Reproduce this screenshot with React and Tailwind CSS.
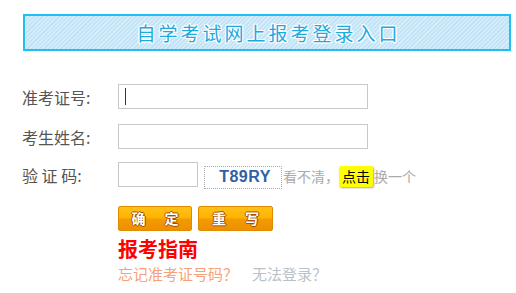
export default function App() {
  const font = { fontFamily: '"Noto Sans CJK SC", "Noto Sans", sans-serif' };
  const outline =
    "[text-shadow:1px_0_0_#fff,-1px_0_0_#fff,0_1px_0_#fff,0_-1px_0_#fff,1px_1px_0_#fff,-1px_-1px_0_#fff,1px_-1px_0_#fff,-1px_1px_0_#fff]";
  const btnText =
    "[text-shadow:1px_0_0_#a05000,-1px_0_0_#a05000,0_1px_0_#a05000,0_-1px_0_#a05000]";
  return (
    <div className="w-[516px] h-[293px] bg-white overflow-hidden" style={font}>
      <div className="pt-[14px] pl-[23px]">
        <div className="w-[488px] h-[37px] border-2 border-[#1fc0ef] flex items-center justify-center bg-[repeating-linear-gradient(135deg,#c2e3f6_0px,#c2e3f6_1.5px,#d5edfa_1.5px,#d5edfa_3px)]">
          <span
            className={`text-[19px] leading-none tracking-[3px] pl-[3px] text-[#1ea9df] ${outline}`}
          >
            自学考试网上报考登录入口
          </span>
        </div>
      </div>

      <div className="pl-[22px] pt-[33px] flex flex-col">
        <div className="flex items-center h-[25px]">
          <span className="w-[96px] text-[16px] text-[#555]">准考证号:</span>
          <div className="w-[250px] h-[25px] border border-[#c8c8c8] flex items-center pl-[6px]">
            <div className="w-[1px] h-[17px] bg-[#333]" />
          </div>
        </div>
        <div className="flex items-center h-[25px] mt-[15px]">
          <span className="w-[96px] text-[16px] text-[#555]">考生姓名:</span>
          <div className="w-[250px] h-[25px] border border-[#c8c8c8]" />
        </div>
        <div className="flex items-center h-[25px] mt-[13px]">
          <span className="w-[96px] text-[16px] text-[#555] whitespace-pre">验 证 码:</span>
          <div className="w-[80px] h-[25px] border border-[#c8c8c8]" />
          <div className="ml-[6px] mt-[5px] w-[78px] h-[23px] border border-dotted border-[#aaa] flex items-center justify-center">
            <span
              className="text-[16px] font-bold text-[#2f5fa8] tracking-[0.5px] pl-[4px]"
              style={{ fontFamily: '"Liberation Sans", Arial, sans-serif' }}
            >
              T89RY
            </span>
          </div>
          <span className="ml-[1px] mt-[3px] text-[14px] text-[#aaa] flex items-center">
            看不清，
            <span className="bg-[#ffff00] text-black px-[3px] rounded-[2px] shadow-[1px_1px_2px_rgba(0,0,0,0.35)] mr-[1px]">
              点击
            </span>
            换一个
          </span>
        </div>

        <div className="flex ml-[96px] mt-[19px] gap-[6px]">
          <div
            className={`w-[74px] h-[25px] rounded-[2px] border border-[#e08a00] bg-[linear-gradient(#ffc21a,#ffb300_45%,#f29a00_55%,#ef8f00)] flex items-center justify-center text-white text-[14px] font-bold whitespace-pre ${btnText}`}
          >
            确      定
          </div>
          <div
            className={`w-[75px] h-[25px] rounded-[2px] border border-[#e08a00] bg-[linear-gradient(#ffc21a,#ffb300_45%,#f29a00_55%,#ef8f00)] flex items-center justify-center text-white text-[14px] font-bold whitespace-pre ${btnText}`}
          >
            重      写
          </div>
        </div>

        <div className="ml-[96px] mt-[6px] text-[20px] leading-[24px] font-bold text-[#ff0000]">
          报考指南
        </div>
        <div className="ml-[96px] mt-[3px] text-[15px] leading-[20px] flex">
          <span className="text-[#f5a27c]">忘记准考证号码？</span>
          <span className="ml-[14px] text-[#b9c2ca]">无法登录？</span>
        </div>
      </div>
    </div>
  );
}
